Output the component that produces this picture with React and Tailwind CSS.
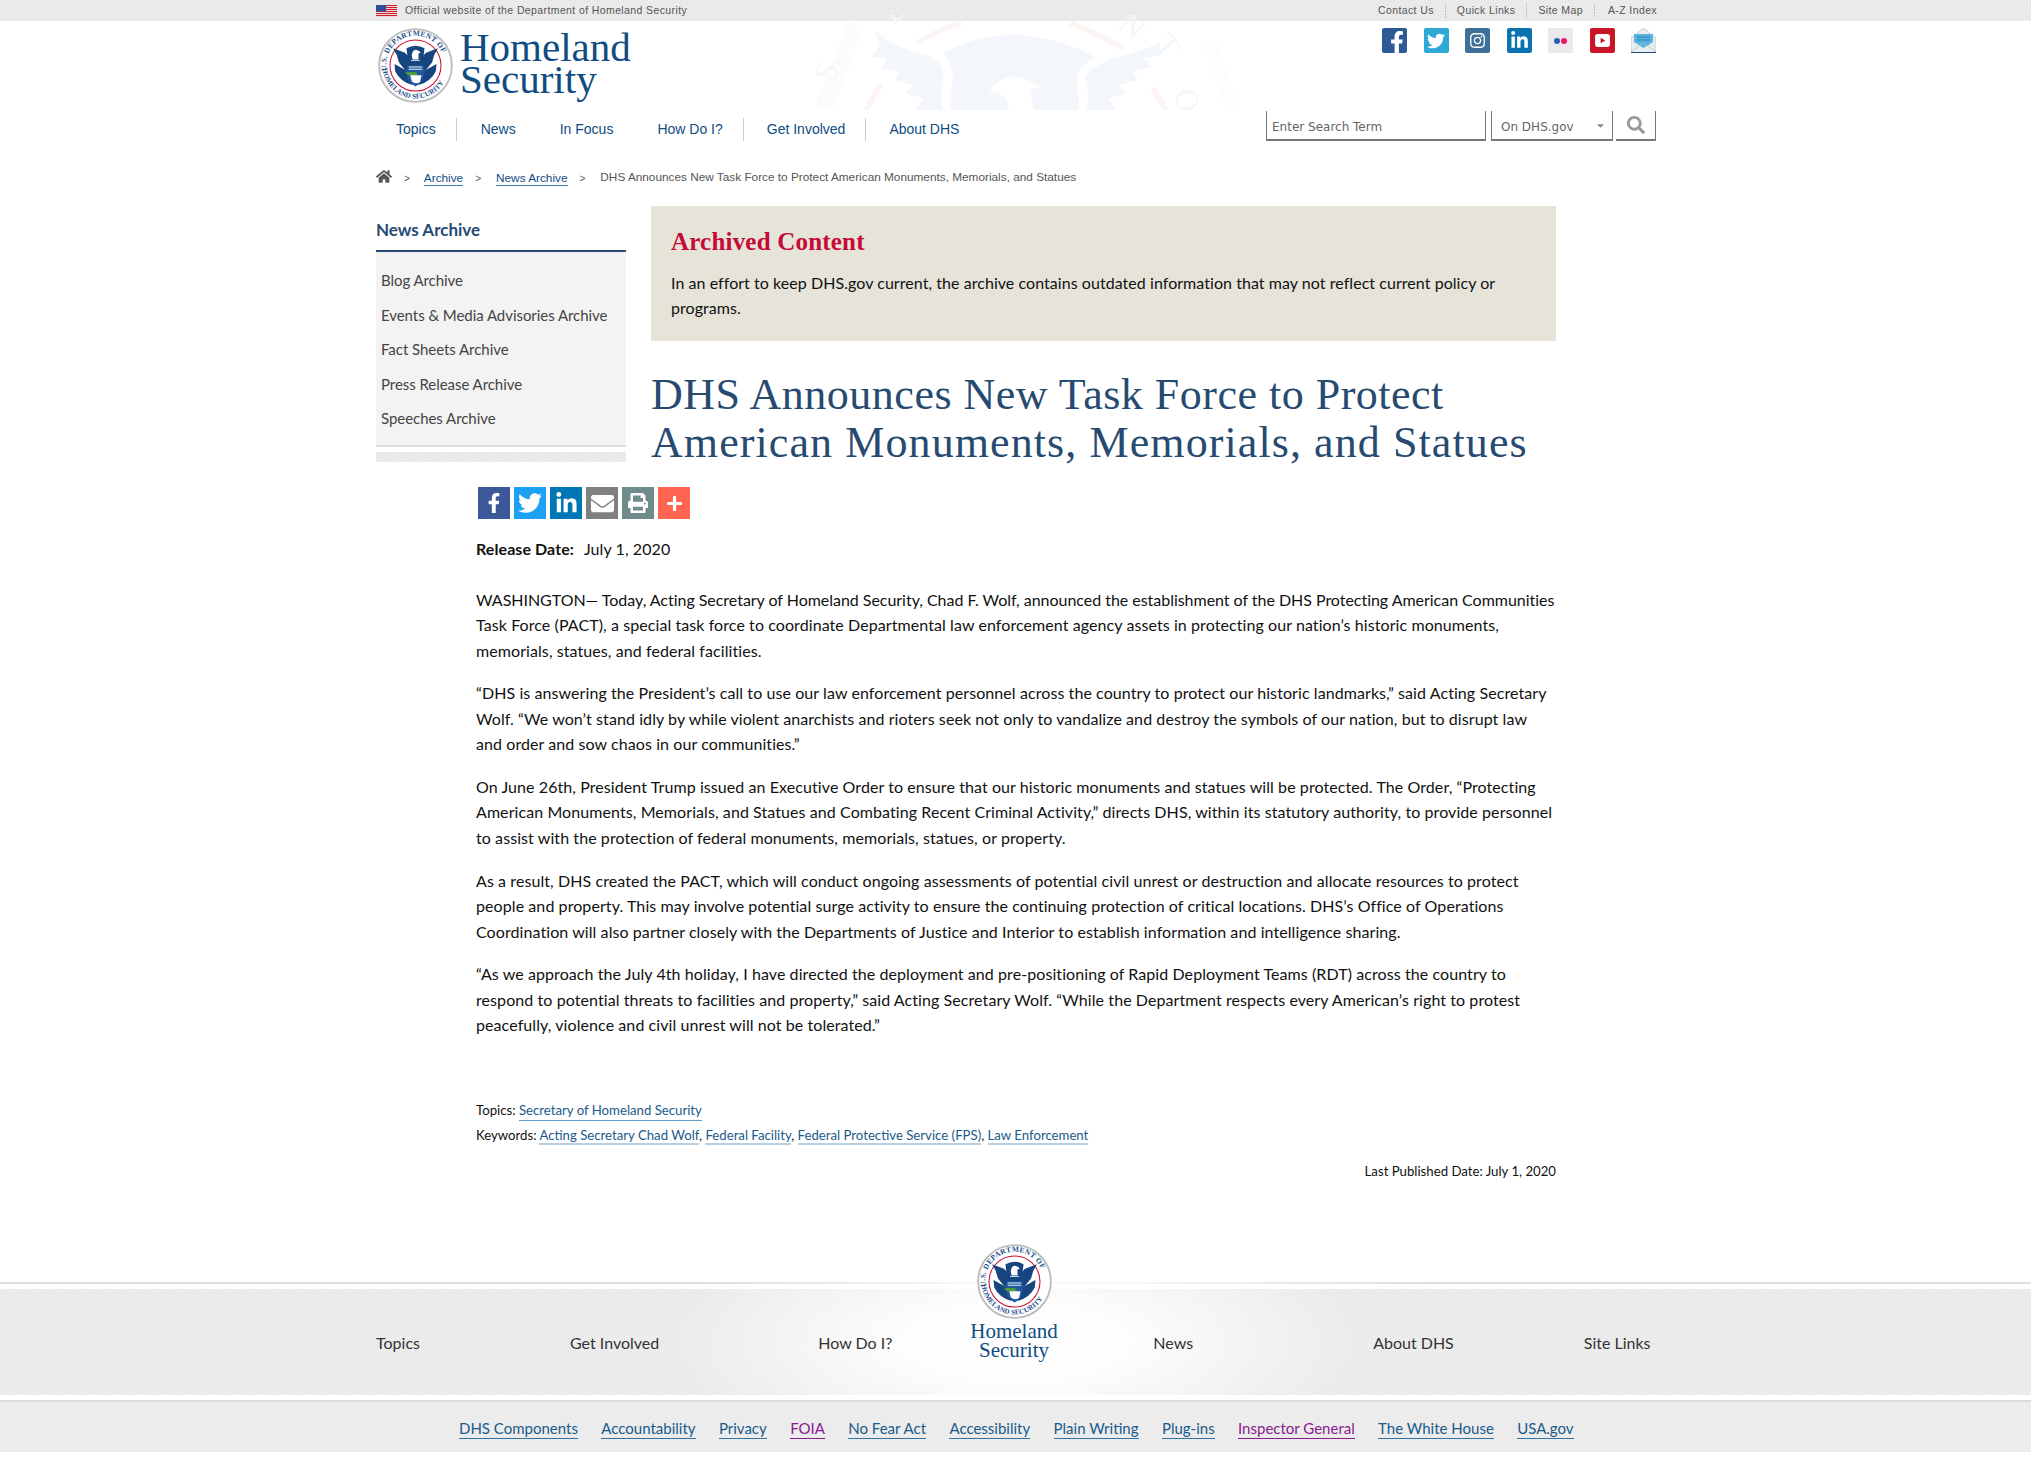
import React from 'react';
import { FaFacebookF, FaTwitter, FaLinkedinIn, FaEnvelope, FaPrint, FaPlus, FaInstagram, FaHome, FaSearch, FaCaretDown } from 'react-icons/fa';

const stripes = "bg-[repeating-linear-gradient(135deg,#e4e4e4_0,#e4e4e4_1.06px,#f5f5f5_1.06px,#f5f5f5_2.1213px)]";

function Seal({ className, id }) {
  return (
    <svg viewBox="0 0 100 100" className={className}>
      <defs>
        <path id={id + "t"} d="M 12 58 A 39 39 0 1 1 88 58" />
        <path id={id + "b"} d="M 6 50 A 44 44 0 0 0 94 50" />
      </defs>
      <circle cx="50" cy="50" r="48.5" fill="#fff" stroke="#bdbdbd" strokeWidth="2.5" />
      <text fontFamily="'Liberation Serif',serif" fontWeight="700" fontSize="10" fill="#1d4f8a" letterSpacing="0.4">
        <textPath href={"#" + id + "t"} startOffset="1%">U.S. DEPARTMENT OF</textPath>
      </text>
      <text fontFamily="'Liberation Serif',serif" fontWeight="700" fontSize="9.5" fill="#1d4f8a" letterSpacing="0.1">
        <textPath href={"#" + id + "b"} startOffset="3%">HOMELAND SECURITY</textPath>
      </text>
      <circle cx="50" cy="50" r="34" fill="#fff" stroke="#c8102e" strokeWidth="1.4" />
      <path d="M20 27 L36 33 L44 41 L44 60 L36 56 L28 46 L25 36Z" fill="#17457f" />
      <path d="M80 27 L64 33 L56 41 L56 60 L64 56 L72 46 L75 36Z" fill="#17457f" />
      <path d="M38 27 Q50 20 62 27 L60 43 L40 43Z" fill="#17457f" />
      <path d="M45 36 Q46 29 51 29 Q55 30 57 33 L54 34 L54 42 L46 42Z" fill="#fff" />
      <path d="M22 48 L40 58 L46 76 Q30 72 23 58Z" fill="#17457f" />
      <path d="M78 48 L60 58 L54 76 Q70 72 77 58Z" fill="#17457f" />
      <path d="M39 44 H61 V62 Q61 72 50 78 Q39 72 39 62Z" fill="#1f5a9e" />
      <rect x="39" y="44" width="22" height="6" fill="#17457f" />
      <path d="M41 52 H59 M41 55 H59" stroke="#fff" strokeWidth="1.2" />
      <path d="M36 59 L51 59 L53 63 L40 63Z" fill="#4ea431" />
      <path d="M43 63 H58 L56 72 Q50 76 45 71Z" fill="#fff" />
    </svg>
  );
}

function Watermark() {
  const c = "#f3f7fb";
  return (
    <svg viewBox="0 0 1380 285" className="absolute left-[780px] top-[15px] w-[460px] h-[95px]">
      <path d="M130 285 L230 25" stroke="#fcfcfc" strokeWidth="50" fill="none" />
      <path d="M1290 90 L1360 285" stroke="#fdfdfd" strokeWidth="40" fill="none" />
      <path d="M415 82 Q470 45 545 24" stroke="#fdf5f3" strokeWidth="16" fill="none" />
      <path d="M870 24 Q950 55 1030 100" stroke="#fdf5f3" strokeWidth="16" fill="none" />
      <path d="M302 208 L258 285" stroke="#fdf5f3" strokeWidth="16" fill="none" />
      <path d="M1118 218 L1158 285" stroke="#fdf5f3" strokeWidth="16" fill="none" />
      <path d="M490 115 Q700 0 945 125 Q890 160 890 200 Q900 250 895 285 L510 285 Q510 240 520 190 Q515 140 490 115Z" fill={c} />
      <path d="M630 235 Q640 195 700 183 Q740 190 780 215 L750 225 L760 285 L685 285 Q690 240 640 230Z" fill="#fff" />
      <path d="M283 45 Q340 100 440 120 Q495 145 490 190 Q478 240 490 285 L405 285 L430 250 L375 235 L400 210 L345 195 L360 170 L305 160 L320 130 L275 125 L300 90Z" fill={c} />
      <path d="M1140 80 Q1090 110 1000 130 Q915 165 915 190 Q930 240 920 285 L1010 285 L985 250 L1040 235 L1015 210 L1075 195 L1055 170 L1115 155 L1090 130 L1140 120Z" fill={c} />
      <g fontFamily="'Liberation Serif',serif" fontSize="95" fill={c}>
        <text transform="translate(160 205) rotate(-70)">S.</text>
        <text transform="translate(120 270) rotate(-75)">.</text>
        <text transform="translate(340 30) rotate(-40)">D</text>
        <text transform="translate(1010 35) rotate(40)">N</text>
        <text transform="translate(1120 90) rotate(50)">T</text>
        <text transform="translate(1180 235) rotate(70)">O</text>
      </g>
    </svg>
  );
}

function Flag() {
  return (
    <svg viewBox="0 0 21 12" className="w-[21px] h-3 shrink-0">
      <rect width="21" height="12" fill="#fff" />
      {[0, 2, 4, 6, 8, 10].map(y => <rect key={y} y={y} width="21" height="1.2" fill="#c9202f" />)}
      <rect width="10" height="6.5" fill="#2f4f9a" />
    </svg>
  );
}

function SocialTop() {
  const base = "w-[25px] h-[25px] rounded-[2px] flex items-center justify-center text-white";
  return (
    <div className="flex gap-[16.5px]">
      <div className={base + " bg-[#2d5a96] items-end"}><FaFacebookF className="w-5 h-[22px] translate-x-[2px]" /></div>
      <div className={base + " bg-[#2ea9d6]"}><FaTwitter className="w-[18px] h-[18px]" /></div>
      <div className={base + " bg-[#3f7099]"}><FaInstagram className="w-[17px] h-[17px]" /></div>
      <div className={base + " bg-[#0a73b0]"}><FaLinkedinIn className="w-[19px] h-[19px]" /></div>
      <div className={base + " bg-[#eaeaea] gap-[1px]"}>
        <span className="w-[6px] h-[6px] rounded-full bg-[#2a5fb0]" />
        <span className="w-[6px] h-[6px] rounded-full bg-[#f4136f]" />
      </div>
      <div className={base + " bg-[#c91526]"}>
        <svg viewBox="0 0 16 14" className="w-[15px] h-[13px]"><rect width="16" height="14" rx="3" fill="#fff" /><path d="M6 4 L11 7 L6 10Z" fill="#c91526" /></svg>
      </div>
      <svg viewBox="0 0 25 25" className="w-[25px] h-[25px]">
        <path d="M0 10 L12.5 0 L25 10 V25 H0Z" fill="#e8eeef" stroke="#b9c3c8" strokeWidth="0.8" />
        <path d="M3 6 H22 V14 L12.5 20 L3 14Z" fill="#58b4df" />
        <path d="M6 9 H19 M6 12 H19" stroke="#2c7fb0" strokeWidth="1" />
        <path d="M0 24.5 H25" stroke="#27457a" strokeWidth="1" />
        <path d="M0 24 L12 15 M25 24 L13 15" stroke="#b9c3c8" strokeWidth="0.8" />
      </svg>
    </div>
  );
}

const shareBase = "w-8 h-8 flex items-center justify-center text-white";

export default function App() {
  return (
    <div className="relative w-[2031px] h-[1468px] overflow-hidden bg-white text-[#111] font-['Lato',sans-serif]">
      {/* Top bar */}
      <div className={"h-[21px] " + stripes}>
        <div className="ml-[376px] w-[1281px] h-[21px] flex items-center justify-between font-['Liberation_Sans',sans-serif] text-[10.5px] tracking-[0.39px] text-[#555]">
          <div className="flex items-center gap-2">
            <Flag />
            <span>Official website of the Department of Homeland Security</span>
          </div>
          <div className="flex items-center">
            <span className="pr-[11px] border-r border-[#ccc]">Contact Us</span>
            <span className="px-[11px] border-r border-[#ccc]">Quick Links</span>
            <span className="px-[11px] border-r border-[#ccc]">Site Map</span>
            <span className="pl-[13px]">A-Z Index</span>
          </div>
        </div>
      </div>

      <Watermark />

      {/* Header */}
      <div className="relative ml-[376px] w-[1280px] h-[100px]">
        <div className="flex items-start pt-[7px] pl-[2px]">
          <Seal id="a" className="w-[75px] h-[75px] shrink-0" />
          <div className="ml-[7px] mt-[3px] font-['Liberation_Serif',serif] text-[#0f4c81] text-[41px] leading-[32px]">
            <div>Homeland</div>
            <div>Security</div>
          </div>
          <div className="ml-auto">
            <SocialTop />
          </div>
        </div>
      </div>

      {/* Nav and search */}
      <div className="ml-[376px] w-[1280px] h-[36px] -mt-[10px] flex items-start justify-between">
        <nav className="mt-[7px] flex items-center h-[23px] text-[14px] text-[#0f4c81] font-['Liberation_Sans',sans-serif]">
          <span className="ml-5 pr-5 h-[23px] leading-[23px] border-r border-[#ccc]">Topics</span>
          <span className="ml-6 h-[23px] leading-[23px]">News</span>
          <span className="ml-[44px] h-[23px] leading-[23px]">In Focus</span>
          <span className="ml-[44px] pr-5 h-[23px] leading-[23px] border-r border-[#ccc]">How Do I?</span>
          <span className="ml-[23px] pr-5 h-[23px] leading-[23px] border-r border-[#ccc]">Get Involved</span>
          <span className="ml-[23px] h-[23px] leading-[23px]">About DHS</span>
        </nav>
        <div className="flex items-stretch h-[30px] text-[12px] text-[#666] font-['DejaVu_Sans',sans-serif]">
          <div className="w-[220px] border-x border-b-2 border-[#777] pl-[5px] leading-[32px] whitespace-nowrap">Enter Search Term</div>
          <div className="ml-[5px] w-[122px] border-x border-b-2 border-[#777] pl-[9px] leading-[32px] relative whitespace-nowrap">
            On DHS.gov
            <FaCaretDown className="absolute right-[6px] top-[9px] w-[11px] h-[11px] text-[#888]" />
          </div>
          <div className="ml-[3px] w-[40px] border-r border-b-2 border-[#777] flex items-center justify-center">
            <FaSearch className="w-[18px] h-[18px] text-[#999]" />
          </div>
        </div>
      </div>

      {/* Breadcrumb */}
      <div className="ml-[376px] mt-[23px] h-[16px] flex items-center text-[11.8px] text-[#555] font-['Liberation_Sans',sans-serif] whitespace-nowrap">
        <FaHome className="w-[16px] h-[15px] text-[#555] -mt-[3px]" />
        <span className="ml-3 text-[10px]">&gt;</span>
        <span className="ml-[14px] text-[#0f4c81] border-b border-[#3b7ba8] leading-[14px]">Archive</span>
        <span className="ml-3 text-[10px]">&gt;</span>
        <span className="ml-[15px] text-[#0f4c81] border-b border-[#3b7ba8] leading-[14px]">News Archive</span>
        <span className="ml-3 text-[10px]">&gt;</span>
        <span className="ml-[15px]">DHS Announces New Task Force to Protect American Monuments, Memorials, and Statues</span>
      </div>

      {/* Main area */}
      <div className="ml-[376px] mt-[20px] w-[1180px] flex">
        <aside className="w-[250px] shrink-0">
          <h2 className="mt-[13px] h-[31px] text-[17px] leading-[22px] font-bold text-[#254a73]">News Archive</h2>
          <div className="border-t-2 border-[#254a73] bg-[#f3f3f3] border-b-2 border-b-[#dedede] pt-[11px] pb-[9px] text-[15px] tracking-[-0.05px] text-[#444]">
            {["Blog Archive", "Events & Media Advisories Archive", "Fact Sheets Archive", "Press Release Archive", "Speeches Archive"].map(t => (
              <div key={t} className="h-[34.6px] leading-[34.6px] pl-[5px] whitespace-nowrap">{t}</div>
            ))}
          </div>
          <div className={"mt-[5px] h-[10px] " + stripes} />
        </aside>
        <main className="ml-[25px] w-[905px]">
          <div className="h-[135px] bg-[#e6e4d9] pl-5 pt-[20px]">
            <div className="font-['Liberation_Serif',serif] font-bold text-[25px] leading-[32px] tracking-[0.2px] text-[#c50a37]">Archived Content</div>
            <p className="mt-[12px] text-[16px] tracking-[0.05px] leading-[25px] text-[#111]">
              In an effort to keep DHS.gov current, the archive contains outdated information that may not reflect current policy or<br />programs.
            </p>
          </div>
          <h1 className="mt-[30px] font-['Liberation_Serif',serif] text-[44px] leading-[47.5px] tracking-[1.09px] text-[#264a70] whitespace-nowrap">
            <span className="tracking-[0.5px]">DHS Announces New Task Force to Protect</span><br />American Monuments, Memorials, and Statues
          </h1>
        </main>
      </div>

      {/* Article */}
      <article className="ml-[476px] w-[1080px] mt-[21px]">
        <div className="flex gap-1 ml-[2px]">
          <div className={shareBase + " bg-[#3b5998]"}><FaFacebookF className="w-5 h-5" /></div>
          <div className={shareBase + " bg-[#1da1f2]"}><FaTwitter className="w-6 h-6" /></div>
          <div className={shareBase + " bg-[#0077b5]"}><FaLinkedinIn className="w-[23px] h-[23px]" /></div>
          <div className={shareBase + " bg-[#808080]"}><FaEnvelope className="w-[23px] h-[23px]" /></div>
          <div className={shareBase + " bg-[#6f8b8b]"}><FaPrint className="w-5 h-5" /></div>
          <div className={shareBase + " bg-[#ff6550]"}><FaPlus className="w-[17px] h-[17px]" /></div>
        </div>
        <div className="mt-[17px] text-[16px] tracking-[0.08px] leading-[25.5px] whitespace-nowrap">
          <b>Release Date:</b><span className="ml-[10px]">July 1, 2020</span>
        </div>
        <div className="mt-[25px] text-[16px] tracking-[0.08px] leading-[25.6px] text-[#111] whitespace-nowrap flex flex-col gap-[16.9px]">
          <p><span className="tracking-[-0.03px]">WASHINGTON— Today, Acting Secretary of Homeland Security, Chad F. Wolf, announced the establishment of the DHS Protecting American Communities</span><br />Task Force (PACT), a special task force to coordinate Departmental law enforcement agency assets in protecting our nation’s historic monuments,<br />memorials, statues, and federal facilities.</p>
          <p>“DHS is answering the President’s call to use our law enforcement personnel across the country to protect our historic landmarks,” said Acting Secretary<br />Wolf. “We won’t stand idly by while violent anarchists and rioters seek not only to vandalize and destroy the symbols of our nation, but to disrupt law<br />and order and sow chaos in our communities.”</p>
          <p>On June 26th, President Trump issued an Executive Order to ensure that our historic monuments and statues will be protected. The Order, “Protecting<br />American Monuments, Memorials, and Statues and Combating Recent Criminal Activity,” directs DHS, within its statutory authority, to provide personnel<br />to assist with the protection of federal monuments, memorials, statues, or property.</p>
          <p>As a result, DHS created the PACT, which will conduct ongoing assessments of potential civil unrest or destruction and allocate resources to protect<br />people and property. This may involve potential surge activity to ensure the continuing protection of critical locations. DHS’s Office of Operations<br />Coordination will also partner closely with the Departments of Justice and Interior to establish information and intelligence sharing.</p>
          <p>“As we approach the July 4th holiday, I have directed the deployment and pre-positioning of Rapid Deployment Teams (RDT) across the country to<br />respond to potential threats to facilities and property,” said Acting Secretary Wolf. “While the Department respects every American’s right to protest<br />peacefully, violence and civil unrest will not be tolerated.”</p>
        </div>
        <div className="mt-[60px] text-[13.2px] leading-[25px] whitespace-nowrap">
          <div>Topics: <span className="text-[#1a5a8a] border-b border-[#5a9bc8] pb-[2px]">Secretary of Homeland Security</span></div>
          <div>Keywords: <span className="text-[#1a5a8a] border-b-2 border-[#b9cfe0]">Acting Secretary Chad Wolf</span>, <span className="text-[#1a5a8a] border-b-2 border-[#b9cfe0]">Federal Facility</span>, <span className="text-[#1a5a8a] border-b-2 border-[#b9cfe0]">Federal Protective Service (FPS)</span>, <span className="text-[#1a5a8a] border-b-2 border-[#b9cfe0]">Law Enforcement</span></div>
        </div>
        <div className="mt-[11px] text-right text-[13.2px] leading-[25px]">Last Published Date: July 1, 2020</div>
      </article>

      {/* Footer */}
      <footer className="absolute left-0 right-0 top-[1282px]">
        <div className="h-[2px] bg-[linear-gradient(90deg,#dedede_0,#dedede_35%,#f8f8f8_48%,#f8f8f8_55%,#dedede_70%,#dedede_100%)]" />
        <div className="relative mt-[5px] h-[106px] bg-[radial-gradient(ellipse_340px_120px_at_50%_50%,#ffffffee_30%,#ffffff00_100%),repeating-linear-gradient(135deg,#e6e6e6_0,#e6e6e6_1.06px,#f7f7f7_1.06px,#f7f7f7_2.1213px)]">
          <div className="ml-[376px] w-[1280px] h-[106px] pt-[2px] flex items-center text-[16px] text-[#333] whitespace-nowrap">
            <span>Topics</span>
            <span className="ml-[150px]">Get Involved</span>
            <span className="ml-[159px]">How Do I?</span>
            <span className="ml-[261px]">News</span>
            <span className="ml-[180px]">About DHS</span>
            <span className="ml-[130px]">Site Links</span>
          </div>
          <div className="absolute left-[967px] -top-[45px] w-[94px] flex flex-col items-center">
            <Seal id="b" className="w-[75px] h-[75px]" />
            <div className="mt-[3px] font-['Liberation_Serif',serif] text-[#0f4c81] text-[21px] leading-[19px] text-center">Homeland<br />Security</div>
          </div>
        </div>
        <div className="mt-[5px] h-[52px] pt-[2px] bg-[#ececec] border-t-2 border-[#dcdcdc] pl-[459px] flex items-center gap-[23.4px] text-[15px] text-[#1a5a8a] whitespace-nowrap">
          {[["DHS Components"], ["Accountability"], ["Privacy"], ["FOIA", 1], ["No Fear Act"], ["Accessibility"], ["Plain Writing"], ["Plug-ins"], ["Inspector General", 1], ["The White House"], ["USA.gov"]].map(([t, v]) => (
            <span key={t} className={v ? "text-[#8a1a8f] border-b border-[#8a1a8f] leading-[20px]" : "border-b border-[#2f72a3] leading-[20px]"}>{t}</span>
          ))}
        </div>
      </footer>
    </div>
  );
}
